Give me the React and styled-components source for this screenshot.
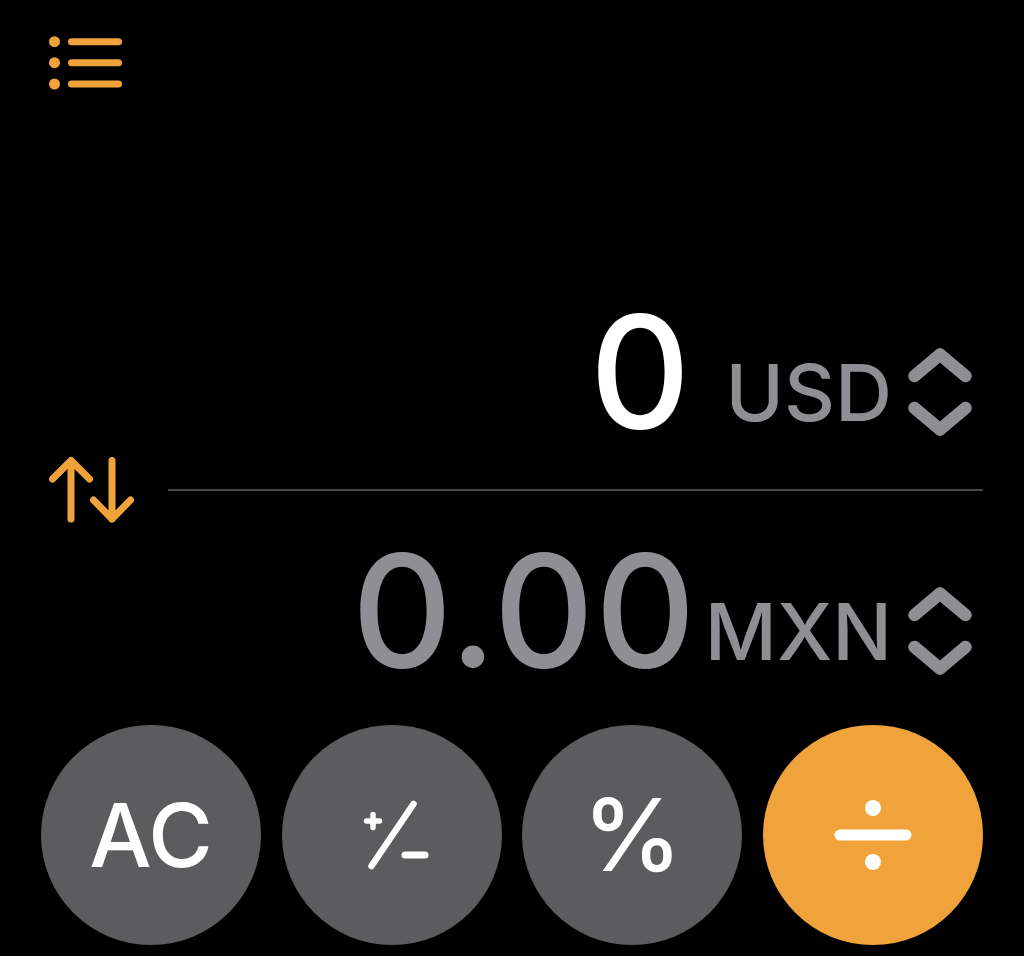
import styled, { createGlobalStyle } from 'styled-components'

const ORANGE = '#f1a33b'
const MUTED = '#8e8e93'

const GlobalStyle = createGlobalStyle`
  html, body {
    margin: 0;
    padding: 0;
    background: #000;
  }

  body {
    font-family: 'Inter', 'Liberation Sans', sans-serif;
    -webkit-font-smoothing: antialiased;
  }
`

const MenuIcon = () => (
  <svg width='74' height='54' viewBox='0 0 74 54' fill='none'>
    {[5.7, 26.7, 48].map((y) => (
      <g key={y}>
        <circle cx='5.5' cy={y} r='5.5' fill={ORANGE} />
        <line x1='22.5' y1={y} x2='69.5' y2={y} stroke={ORANGE} strokeWidth='7' strokeLinecap='round' />
      </g>
    ))}
  </svg>
)

const SwapIcon = () => (
  <svg width='86' height='68' viewBox='0 0 86 68' fill='none' stroke={ORANGE} strokeWidth='7' strokeLinecap='round' strokeLinejoin='round'>
    <path d='M22 63V4.5M3.5 23L22 4.5L40.5 23' />
    <path d='M63 4.5V63M44.5 44L63 63L81.5 44' />
  </svg>
)

const Chevrons = () => (
  <svg width='64' height='88' viewBox='0 0 64 88' fill='none' stroke={MUTED} strokeWidth='12.5' strokeLinecap='round' strokeLinejoin='round'>
    <path d='M6.5 28L32 6.5L57.5 28' />
    <path d='M6.5 60L32 81.5L57.5 60' />
  </svg>
)

const PlusMinus = () => (
  <svg width='80' height='72' viewBox='0 0 80 72' fill='none' stroke='#fff' strokeLinecap='round'>
    <path d='M21 15.5V28.5M14.5 22H27.5' strokeWidth='5.5' />
    <path d='M19.5 67L61.5 5' strokeWidth='6.5' />
    <path d='M53 56H73' strokeWidth='7' />
  </svg>
)

const Divide = () => (
  <svg width='80' height='80' viewBox='0 0 80 80' fill='#fff'>
    <circle cx='40' cy='13' r='8' />
    <circle cx='40' cy='67' r='8' />
    <line x1='7' y1='40' x2='73' y2='40' stroke='#fff' strokeWidth='11' strokeLinecap='round' />
  </svg>
)

const AmountRow = ({ value, currency, active, spaced }) => (
  <Row>
    <Amount $active={active}>{value}</Amount>
    <Currency $spaced={spaced}>
      <Code>{currency}</Code>
      <Chevrons />
    </Currency>
  </Row>
)

const keys = [
  { label: 'AC' },
  { label: <PlusMinus />, aria: 'plus minus' },
  { label: '%', big: true },
  { label: <Divide />, aria: 'divide', accent: true },
]

export default function App() {
  return (
    <Screen>
      <GlobalStyle />
      <TopBar>
        <MenuButton aria-label='menu'>
          <MenuIcon />
        </MenuButton>
      </TopBar>

      <Display>
        <AmountRow value='0' currency='USD' active spaced />
        <SwapRow>
          <SwapButton aria-label='swap'>
            <SwapIcon />
          </SwapButton>
          <Divider />
        </SwapRow>
        <AmountRow value='0.00' currency='MXN' />
      </Display>

      <Keypad>
        {keys.map((key, i) => (
          <Key key={i} $accent={key.accent} $big={key.big} aria-label={key.aria}>
            {key.label}
          </Key>
        ))}
      </Keypad>
    </Screen>
  )
}

const Screen = styled.div`
  width: 1024px;
  height: 956px;
  background: #000;
  display: flex;
  flex-direction: column;
  overflow: hidden;
`

const TopBar = styled.div`
  display: flex;
  padding: 36px 0 0 49px;
`

const MenuButton = styled.button`
  display: flex;
  padding: 0;
  border: 0;
  background: none;
`

const Display = styled.div`
  margin-top: auto;
  display: flex;
  flex-direction: column;
`

const Row = styled.div`
  display: flex;
  justify-content: flex-end;
  align-items: flex-end;
  padding-right: 52px;
`

const Amount = styled.div`
  font-size: 156px;
  line-height: 1;
  font-weight: 500;
  letter-spacing: 1px;
  color: ${(p) => (p.$active ? '#fff' : MUTED)};
`

const Currency = styled.div`
  display: flex;
  align-items: center;
  gap: 16px;
  margin: 0 0 14px ${(p) => (p.$spaced ? '34px' : '8px')};
`

const Code = styled.span`
  font-size: 79px;
  line-height: 1;
  font-weight: 500;
  color: ${MUTED};
`

const SwapRow = styled.div`
  display: flex;
  align-items: center;
  margin: 6px 41px 9px 49px;
`

const SwapButton = styled.button`
  display: flex;
  padding: 0;
  border: 0;
  background: none;
`

const Divider = styled.div`
  flex: 1;
  height: 2px;
  margin-left: 33px;
  background: #48484a;
`

const Keypad = styled.div`
  display: grid;
  grid-template-columns: repeat(4, 220px);
  justify-content: space-between;
  margin: 36px 41px 0;
  padding-bottom: 11px;
`

const Key = styled.button`
  width: 220px;
  height: 220px;
  border-radius: 50%;
  border: 0;
  padding: 0;
  display: flex;
  align-items: center;
  justify-content: center;
  background: ${(p) => (p.$accent ? ORANGE : '#5c5c5e')};
  color: #fff;
  font-family: inherit;
  font-size: ${(p) => (p.$big ? '100px' : '88px')};
  font-weight: 500;
  line-height: 1;
`
